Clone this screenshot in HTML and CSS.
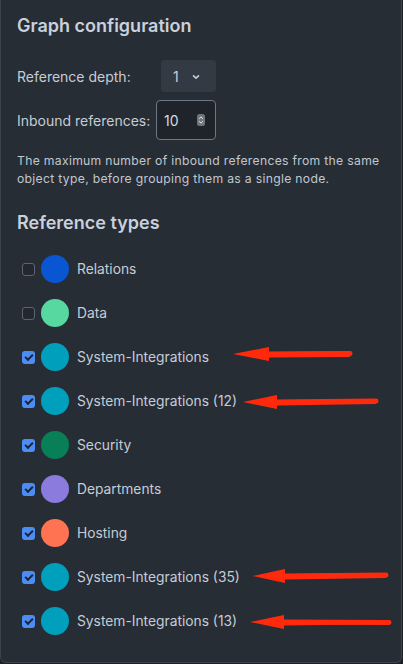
FILE: index.html
```html
<!DOCTYPE html>
<html>
<head>
<meta charset="utf-8">
<link rel="stylesheet" href="styles.css">
</head>
<body>
<div class="panel">
  <h2 class="title">Graph configuration</h2>
  <div class="field depth">
    <span class="label">Reference depth:</span>
    <div class="select"><span>1</span>
      <svg width="10" height="10" viewBox="0 0 10 10"><path d="M2.5 3.8 L5 6.2 L7.5 3.8" fill="none" stroke="#c5ccd6" stroke-width="1.6" stroke-linecap="round" stroke-linejoin="round"/></svg>
    </div>
  </div>
  <div class="field inbound">
    <span class="label">Inbound references:</span>
    <div class="input"><span>10</span>
      <div class="spin">
        <svg width="8" height="12" viewBox="0 0 8 12"><path d="M2.2 4.6 L4 2.9 L5.8 4.6 M2.2 7.4 L4 9.1 L5.8 7.4" fill="none" stroke="#e6e9ed" stroke-width="1" stroke-linecap="round" stroke-linejoin="round"/></svg>
      </div>
    </div>
  </div>
  <p class="desc">The maximum number of inbound references from the same object type, before grouping them as a single node.</p>
  <h2 class="subtitle">Reference types</h2>
  <ul class="types">
    <li><span class="cb"></span><span class="dot c-rel"></span><span>Relations</span></li>
    <li><span class="cb"></span><span class="dot c-data"></span><span>Data</span></li>
    <li><span class="cb on"></span><span class="dot c-sys"></span><span>System-Integrations</span></li>
    <li><span class="cb on"></span><span class="dot c-sys"></span><span>System-Integrations (12)</span></li>
    <li><span class="cb on"></span><span class="dot c-sec"></span><span>Security</span></li>
    <li><span class="cb on"></span><span class="dot c-dep"></span><span>Departments</span></li>
    <li><span class="cb on"></span><span class="dot c-host"></span><span>Hosting</span></li>
    <li><span class="cb on"></span><span class="dot c-sys"></span><span>System-Integrations (35)</span></li>
    <li><span class="cb on"></span><span class="dot c-sys"></span><span>System-Integrations (13)</span></li>
  </ul>
  <svg class="arrow a1" width="122" height="16" viewBox="0 0 122 16"><path d="M0 8 L36 1 L36 6 L117 5 L117 11 L36 11.5 L36 15 Z" fill="#ff2a0c"/><line x1="36" y1="8" x2="117" y2="7.5" stroke="#ff2a0c" stroke-width="5" stroke-linecap="round"/></svg>
  <svg class="arrow a2" width="138" height="16" viewBox="0 0 138 16"><path d="M0 8 L34 1 L34 6 L133 5 L133 10 L34 11.5 L34 15 Z" fill="#ff2a0c"/><line x1="34" y1="8" x2="133" y2="7" stroke="#ff2a0c" stroke-width="5" stroke-linecap="round"/></svg>
  <svg class="arrow a3" width="138" height="16" viewBox="0 0 138 16"><path d="M0 8 L32 1 L32 6 L133 5 L133 10 L32 11.5 L32 15 Z" fill="#ff2a0c"/><line x1="32" y1="8" x2="133" y2="7" stroke="#ff2a0c" stroke-width="5" stroke-linecap="round"/></svg>
  <svg class="arrow a4" width="144" height="16" viewBox="0 0 144 16"><path d="M0 8 L34 1 L34 6 L139 6 L139 10 L34 11.5 L34 15 Z" fill="#ff2a0c"/><line x1="34" y1="8" x2="139" y2="8.5" stroke="#ff2a0c" stroke-width="5" stroke-linecap="round"/></svg>
</div>
</body>
</html>
```
FILE: styles.css
```css
html, body {
  margin: 0;
  padding: 0;
  background: #1d2126;
}
body {
  width: 403px;
  height: 664px;
  overflow: hidden;
  font-family: Inter, "Noto Sans", sans-serif;
  color: #c5ccd6;
}
.panel {
  position: relative;
  box-sizing: border-box;
  width: 402px;
  height: 663px;
  background: #272d35;
  border-left: 1px solid #3c434b;
  border-right: 1px solid #3c434b;
  border-bottom: 1px solid #3c434b;
  border-bottom-left-radius: 6px;
  border-bottom-right-radius: 6px;
  padding: 14px 16px 0 16px;
}
.title, .subtitle {
  margin: 0;
  font-size: 18px;
  font-weight: 600;
  color: #c8d1dc;
  line-height: 24px;
}
.field {
  display: flex;
  align-items: center;
  font-size: 14px;
}
.depth {
  margin-top: 22px;
  gap: 0;
}
.depth .label { width: 144px; }
.select {
  width: 55px;
  height: 32px;
  box-sizing: border-box;
  background: #333a43;
  border-radius: 4px;
  display: flex;
  align-items: center;
  padding-left: 12px;
  gap: 12px;
  font-size: 14px;
  color: #c8d0da;
}
.select svg { margin-top: 1px; }
.inbound {
  margin-top: 8px;
}
.inbound .label { width: 139px; }
.input {
  width: 60px;
  height: 40px;
  box-sizing: border-box;
  border: 1px solid #6b7785;
  border-radius: 4px;
  background: #1f242b;
  display: flex;
  align-items: center;
  padding-left: 7px;
  color: #d4dae2;
  font-size: 14px;
}
.input span { flex: 1; }
.spin {
  width: 8px;
  height: 12px;
  background: #6f757c;
  border-radius: 2.5px;
  margin-right: 10px;
  display: flex;
}
.desc {
  margin: 12px 0 0 0;
  font-size: 12.2px;
  letter-spacing: 0.3px;
  line-height: 18px;
  color: #c0c7d0;
}
.subtitle {
  margin-top: 23px;
}
.types {
  list-style: none;
  margin: 12px 0 0 0;
  padding: 0;
}
.types li {
  height: 44px;
  display: flex;
  align-items: center;
  font-size: 13.8px;
  color: #c5ccd6;
}
.cb {
  width: 13px;
  height: 13px;
  box-sizing: border-box;
  border: 1.5px solid #5b6470;
  border-radius: 3px;
  margin-left: 5px;
  margin-right: 6px;
  background: #23282f;
  display: flex;
  align-items: center;
  justify-content: center;
}
.cb.on {
  border: none;
  background: #4b8df4;
}
.cb.on::after {
  content: "";
  width: 6px;
  height: 3px;
  border-left: 2px solid #1b2230;
  border-bottom: 2px solid #1b2230;
  transform: translateY(-1px) rotate(-45deg);
}
.dot {
  width: 28px;
  height: 28px;
  border-radius: 50%;
  margin-right: 8px;
  flex: none;
}
.c-rel { background: #0a56d2; }
.c-data { background: #56d8a0; }
.c-sys { background: #00a0bd; }
.c-sec { background: #087f56; }
.c-dep { background: #8a7bdd; }
.c-host { background: #ff7352; }
.arrow { position: absolute; }
.a1 { left: 232px; top: 346px; }
.a2 { left: 242px; top: 394px; }
.a3 { left: 252px; top: 568px; }
.a4 { left: 249px; top: 614px; }
```
